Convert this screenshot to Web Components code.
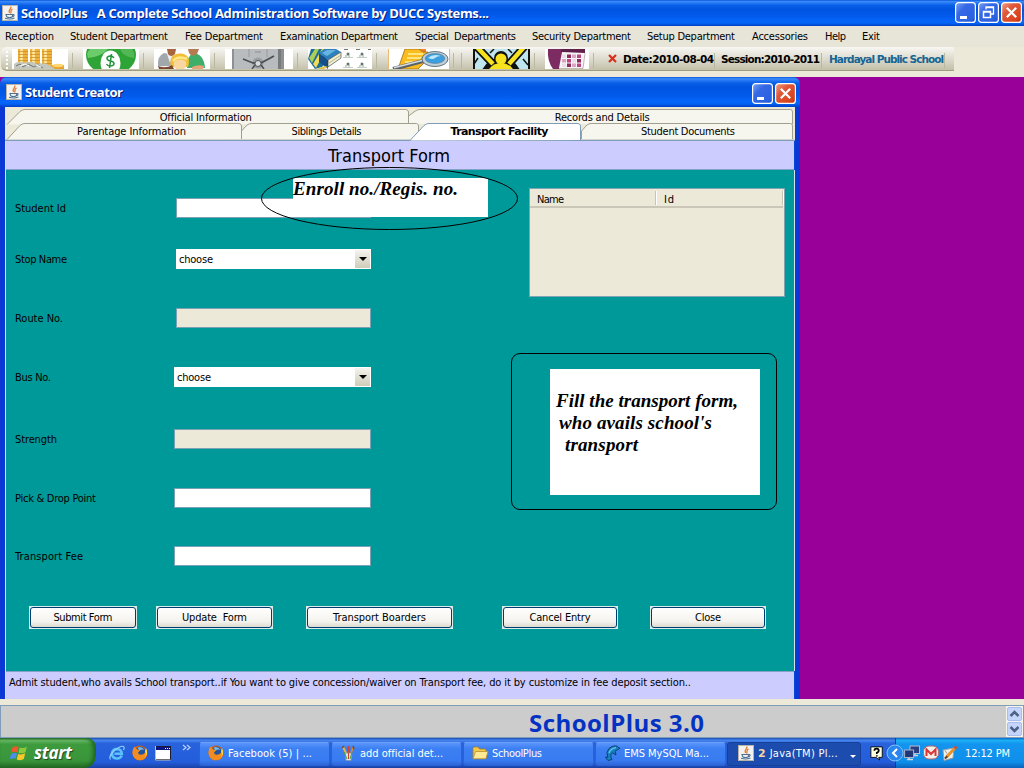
<!DOCTYPE html>
<html lang="en"><head><meta charset="utf-8"><title>SchoolPlus</title>
<style>
html,body{margin:0;padding:0;overflow:hidden;background:#ece9d8}
body{font:11px/14px "DejaVu Sans Condensed","DejaVu Sans",sans-serif;font-stretch:condensed;color:#000}
</style></head><body>
<school-app></school-app>
<script>
const define=(name,html,setup)=>customElements.define(name,class extends HTMLElement{
  connectedCallback(){
    if(this.shadowRoot)return;
    const r=this.attachShadow({mode:'open'});
    r.innerHTML=typeof html==='function'?html(this):html;
    if(setup)setup(this,r);
  }
});

// A single line of text spaced to an exact width.
define('fit-text',e=>`<style>:host{display:block;flex:none;white-space:pre;width:${e.getAttribute('w')}px}span{display:inline-block}</style><span></span>`,(e,r)=>{
  const s=r.querySelector('span');s.textContent=e.getAttribute('t');
  const n=s.getBoundingClientRect().width,w=+e.getAttribute('w');
  const len=s.textContent.length;
  if(len>1)s.style.letterSpacing=((w-n)/(len-1))+'px';
});

const icons={
java:`<rect x=".5" y=".5" width="15" height="15" fill="#f3f2ee" stroke="#b9b4a8"/><path d="M8.800 1.500C10 4 5.500 4.500 7.500 8M10.500 4C7.500 5.500 10 6.500 8.500 8.500" fill="none" stroke="#e8762c" stroke-width="1.300"/><path d="M4 9.500h6.500v1.500q0 1.500-3 1.500t-3-1.500zM10.500 9.800q2-.5 1.500.8t-2 1.200M3 13.300q5 1.500 9.500-.2" fill="none" stroke="#4c7193" stroke-width="1.100"/>`,
flag:`<g transform="skewY(-6) translate(0 1)"><path d="M2 3.500Q4.500 1.500 7.600 3.300L6.500 8Q4 6.500 1 8z" fill="#ee5a2b"/><path d="M8.600 3.800Q11.500 5.500 15 3.800L13.800 8.600Q11 10 7.500 8.500z" fill="#8ac83c"/><path d="M.8 9Q3.500 7.500 6.200 9L5 13.500Q2.500 12-.2 13.500z" fill="#4b8ef0"/><path d="M7.200 9.500Q10.500 11 13.500 9.600L12.300 14.500Q9.500 16 6 14.300z" fill="#fbc927"/></g>`,
ie:`<path d="M12.800 10.500Q11 14 7.500 13.500Q3 13 3 8.500Q3.500 4 8 4Q12.500 4.300 12.800 8.800H5.500" fill="none" stroke="#5ac1fa" stroke-width="2.600"/><path d="M1.500 14.500Q-1 11 6 5Q13-.5 15 2Q15.500 3 14.500 5" fill="none" stroke="#8fd3fb" stroke-width="1.200"/>`,
fox:`<circle cx="8" cy="8" r="7.500" fill="#d9600f"/><circle cx="8.500" cy="6.500" r="5" fill="#23549b"/><path d="M5.500 2.500Q10 1 12.500 5Q9 3.500 7.500 6z" fill="#7ab7e6"/><path d="M1 4Q2 2 3 1.500L4.500 4L8 5.500L6 7.500Q6.500 10.500 10 9.500Q13.500 9 14 4Q17 11 11.500 14.500Q6 16.500 2.500 13Q-.5 9.500 1 4z" fill="#f28c1e"/><path d="M14 3Q17 9 12 13Q15 10 13 6z" fill="#ffd547"/>`,
win:`<rect x=".5" y="1.500" width="15" height="13" fill="#fff" stroke="#1b1b30"/><path d="M1 2h14v3H1z" fill="#0a1484"/><path d="M10 3h1v1h-1zm2 0h1v1h-1zm2 0h1v1h-1z" fill="#fff"/><path d="M.5 1v14h15" fill="none" stroke="#c4c0b0"/>`,
paint:`<path d="M6.500 9L3 2" stroke="#e6b53c" stroke-width="2"/><path d="M8.500 9V1" stroke="#d33f2b" stroke-width="2"/><path d="M10.500 9L13.500 2" stroke="#d8842e" stroke-width="1.800"/><path d="M5 8h7l-1 7.500H6z" fill="#d7e4ec" stroke="#7c93a5" stroke-width=".7"/><path d="M7 14L4 7M10 14l2-7" stroke="#49a23c" stroke-width="1"/><path d="M8.500 14V8" stroke="#d33f2b"/><path d="M2 3l2-2M13 1l1 3" stroke="#7b4a28" stroke-width="1.500"/>`,
folder:`<path d="M1 13.500V3.500Q1 2 2.500 2H6l1.500 2H13q1 0 1 1v8.500z" fill="#f5c84a" stroke="#a5821d" stroke-width=".8"/><path d="M1 13.800L3.500 6.500H16L13.800 13.800z" fill="#ffe994" stroke="#b8922c" stroke-width=".8"/>`,
dolphin:`<path d="M4 15.500Q2.500 14 1.500 12L3.800 12.300Q1.500 7 5 3.500Q8 .8 11.500 .8Q13.500 .8 14 2.300L16 3.200L13.500 4.800Q11.500 5 11.300 6.500L12 10L8.500 7.800Q6 9 7 12.500L8 14.500z" fill="#1681bf" stroke="#07345c" stroke-width=".8"/><path d="M5 8Q6.500 3.500 12 2.600" stroke="#67c8f4" fill="none" stroke-width="1.300"/>`,
help:`<path d="M1 1h13v12H10l1 3-4-3H1z" fill="#ffffe1" stroke="#000"/><path d="M5 5.500Q5 3 7.500 3T10 5.500Q10 7 7.800 7.700V9M7.800 10.500v1.500" fill="none" stroke="#000" stroke-width="2"/>`,
net:`<rect x="6" y="1" width="9.500" height="7.500" fill="#2a3f83" stroke="#b7bed0"/><path d="M8 10.500h6M11 9v2" stroke="#cdd3dd" stroke-width="1.300"/><rect x=".6" y="5" width="9" height="7.500" fill="#203676" stroke="#aab4cc"/><path d="M3 14.500h6M5 13v2" stroke="#d4d8e0" stroke-width="1.500"/>`,
mail:`<rect x=".5" y="1" width="15" height="13" rx="5.500" fill="#f4eeea" stroke="#b06a70"/><path d="M3.500 11V4.500L8 9l4.500-4.500V11" fill="none" stroke="#d63736" stroke-width="2"/>`,
pen:`<path d="M1 5l11-2-1 10-9 2.500z" fill="#f1f1ea" stroke="#9b9fa4"/><path d="M3 5.500l2 3" stroke="#999"/><path d="M4.500 12L13 3" stroke="#e8922b" stroke-width="3"/><path d="M3 13.500l2.300-2.300" stroke="#63402a" stroke-width="2"/><path d="M12.500 3.500l2-2" stroke="#d34d33" stroke-width="3"/>`
};
define('app-icon',e=>`<style>:host{display:block;flex:none;width:16px;height:16px}svg{display:block;overflow:visible}</style><svg width="${e.getAttribute('s')||16}" height="${e.getAttribute('s')||16}" viewBox="0 0 16 16">${icons[e.getAttribute('name')]}</svg>`);

const caps={min:'<path d="M5 14h7v3H5z" fill="#fff"/>',
restore:'<path d="M8 7.500V5h7.500v7H13M8 5.500h8" fill="none" stroke="#fff" stroke-width="1.300"/><path d="M5.500 9.500h7v6h-7zM5.500 10h7" fill="none" stroke="#fff" stroke-width="1.500"/>',
close:'<path d="M5.800 5.800l9.400 9.400m0-9.400l-9.400 9.400" stroke="#fff" stroke-width="2.200"/>'};
define('caption-button',e=>{const k=e.getAttribute('kind'),c=k==='close';return `<style>:host{display:block;flex:none}svg{display:block}</style><svg width="21" height="21" viewBox="0 0 21 21"><defs><linearGradient id="g" x1="0" y1="0" x2="1" y2="1"><stop offset="0" stop-color="${c?'#f0a48c':'#7ba4f6'}"/><stop offset=".35" stop-color="${c?'#e0593a':'#3568e4'}"/><stop offset=".8" stop-color="${c?'#d8421c':'#2a62e2'}"/><stop offset="1" stop-color="${c?'#b03010':'#1d4fc4'}"/></linearGradient></defs><rect x=".6" y=".6" width="19.800" height="19.800" rx="3" fill="url(#g)" stroke="#fff" stroke-width="1.200"/>${caps[k]}</svg>`});

define('title-bar',e=>`<style>
:host{display:flex;flex:none;box-sizing:border-box;align-items:flex-start;background:linear-gradient(#0a55dd 0,#3b8cf8 6%,#2a7df5 10%,#0a5fe8 20%,#0054e0 35%,#0259ea 60%,#0566fb 82%,#0462f2 90%,#003fc4 100%);color:#fff;text-shadow:1px 1px #0a1f78;font:bold 13px/16px "Open Sans","Noto Sans",sans-serif;font-stretch:normal}
.b{margin-left:auto;display:flex;gap:2px}
app-icon{margin-right:3px}
</style><app-icon name="java"></app-icon><fit-text w="${e.getAttribute('w')}" t="${e.getAttribute('t')}"></fit-text><div class="b"><slot></slot></div>`);

const menu=[['Reception',49,16],['Student Department',98,17],['Fee Department',78,17],['Examination Department',118,17],['Special  Departments',101,16],['Security Department',99,16],['Setup Department',88,17],['Accessories',56,17],['Help',21,16],['Exit',18,0]];
define('menu-bar',`<style>:host{display:flex;flex:none;height:21px;padding:4px 0 0 5px;box-sizing:border-box;background:#e7e4d8}</style>`+menu.map(m=>`<fit-text w="${m[1]}" t="${m[0]}" style="margin-right:${m[2]}px"></fit-text>`).join(''));

const stack=(x,y)=>`<rect x="${x}" y="${y}" width="10" height="20" fill="#f0b23a"/><path d="M${x+3.500} ${y}v20" stroke="#ffeaa6" stroke-width="2.500"/>`+[0,3,6,9,12,15].map(i=>`<path d="M${x} ${y+i+2.500}h10" stroke="#c98a22" stroke-width=".7"/>`).join('');
// [width, drawing, gap to the separator, gap after it]
const art=[
[56,stack(6,0)+stack(18,0)+stack(30,0)+`<path d="M40 16h12v4H40z" fill="#e7a42c"/><ellipse cx="46" cy="16.500" rx="5.500" ry="1.700" fill="#ffd56c"/><path d="M2 15q5-4 10-1q7-3 13 1q8-3 18 5H2z" fill="#c3c7bd"/><path d="M4 17l4-2 3 3 5-3 6 3 4-2 5 3" stroke="#73786e" fill="none"/><path d="M8 17l5-2 4 2M24 16l5 2" stroke="#fff" fill="none"/>`,4,10],
[56,`<ellipse cx="28" cy="6" rx="25" ry="20" fill="#2ea336"/><path d="M4 5Q6-2 14-3L25 0Q18 8 5 9z" fill="#6ccb6a"/><path d="M37 0h12q3 4 2 9Q40 8 37 0z" fill="#52b856"/><ellipse cx="27.500" cy="14" rx="10" ry="12.500" fill="#fff"/><path d="M30.800 9Q30 7 27.300 7Q24 7.200 24 9.300Q24 11.500 27.500 12Q31 12.500 31 14.800Q30.500 17 27.300 17Q24.500 17 23.500 15M28.500 5l-2 14" stroke="#23933a" stroke-width="1.500" fill="none"/>`,4,10],
[56,`<path d="M4 17Q3 7 10 4L19 6Q22 10 20 16Q12 18 4 17z" fill="#a2a7ac"/><path d="M13 5l3 9 3-8z" fill="#eee"/><path d="M13 0h9l-1 5q-4 4-7 0z" fill="#a8653f"/><path d="M33 19Q32 8 39 4Q50 5 51 19z" fill="#3fae68"/><path d="M34 0h11l-2 5q-5 4-8-1z" fill="#b77b52"/><path d="M17 18Q14 5 26 4.500Q38 5 34 18z" fill="#f2be35"/><path d="M20 13Q26 8 32 12.500Q33 18 30 20H22Q19 18 20 13z" fill="#fbd7a0"/><path d="M19 12q5-6 14-2" stroke="#ffe88a" stroke-width="2.500" fill="none"/><path d="M4 17q8 3 14-1l2 4H5z" fill="#7c4630"/><path d="M38 18q6-3 12-1l-1 3H38z" fill="#e8a577"/>`,4,10],
[68,`<path d="M7 0h52v20H7z" fill="#8e9193"/><path d="M9 0h44v20H9z" fill="#b9bcbe"/><path d="M53 0h3v20h-3z" fill="#777a7c"/><path d="M24 0v8M42 0v8" stroke="#96999b"/><path d="M30 3h6" stroke="#8a8d8f"/><circle cx="33" cy="14" r="5.500" fill="#9b9ea0"/><path d="M18 10l10 4 6 1 15-8" fill="none" stroke="#4b5054" stroke-width="1.800"/><circle cx="33" cy="14.500" r="3" fill="#d9dbdc" stroke="#54585b"/><path d="M27 20l3-4M39 20l-3-4" stroke="#4b5054" stroke-width="1.500"/>`,4,10],
[64,`<path d="M0 10L3 0h24L14 18 7 20z" fill="#1d6d96"/><path d="M1 9L7 0h4L4 14z" fill="#a8cf57"/><path d="M5 15L14 0h4L8 19z" fill="#f0dc58"/><path d="M11 4L16 0h12l5 3L20 11z" fill="#2d82be"/><path d="M14 4l5-3h9l-9 6z" fill="#66b4df"/><path d="M11 4l9 7v9L11 13z" fill="#174f88"/><path d="M20 11l13-8v6L20 18z" fill="#f2efcd" stroke="#234" stroke-width=".6"/><path d="M21 14l12-8" stroke="#9a9978" stroke-width=".7"/><path d="M8 20l9-3 3 1-4 2z" fill="#e2c34a"/>`+[[40,5],[54,5],[40,15],[54,15]].map(p=>`<path d="M${p[0]-5} ${p[1]+3.500}h10" stroke="#c4cfc4"/><circle cx="${p[0]}" cy="${p[1]}" r="1.500" fill="#65756c"/><path d="M${p[0]-3} ${p[1]+2}h6" stroke="#8fa898" stroke-dasharray="2 1"/>`).join('')+`<path d="M36 .5h27" stroke="#777" stroke-dasharray="4 8"/>`,4,11],
[62,`<path d="M.5 0v20M61.500 0v20" stroke="#ecba72"/><path d="M17 0h21v5H17z" fill="#f08427"/><path d="M17 0h14l4 3h5l-1 8L30 20H10z" fill="#fbbd1d" stroke="#a06416" stroke-width=".8"/><path d="M20 5h15M19 9h14M17 13h12" stroke="#fff2a3" stroke-width="1.500"/><path d="M5 20l30-8" stroke="#5a626a" stroke-width="4"/><path d="M6 18.800l29-7.500" stroke="#d4dce0" stroke-width="1.500"/><ellipse cx="47" cy="10" rx="13" ry="7.500" fill="#c3d0d8" stroke="#66757f"/><ellipse cx="47" cy="9.500" rx="9.800" ry="5" fill="#3b9ede" stroke="#5a7a92" stroke-width=".6"/><path d="M40 9q5-5 13-2q-4 0-6 2t-7 0z" fill="#bfe6fb"/>`,3,19],
[57,`<rect width="57" height="20" fill="#bfe6ef"/><path d="M1 0v20M56 0v20" stroke="#111" stroke-width="2"/><path d="M3-3L20 15M52-3L36 15M12 24Q17 13 28 13Q39 13 44 24" fill="none" stroke="#111" stroke-width="8"/><circle cx="28" cy="9" r="7" fill="#111"/><path d="M3-3L20 15M52-3L36 15" fill="none" stroke="#f7e31d" stroke-width="4.500"/><path d="M14 24Q18 14 28 14Q38 14 42 24z" fill="#f7e31d"/><circle cx="28" cy="10" r="5.500" fill="#f7e31d"/><path d="M5 9l-4 6M50 10l5 6M17 4l4-4M39 4l-4-4" stroke="#111" stroke-width="1.500"/>`,4,10],
[44,`<path d="M3 0h20L14 20H8Q2 12 3 0z" fill="#7d2c63"/><path d="M16 0h24v5H16z" fill="#5f2049"/><path d="M17 3l23 1-2 15H14z" fill="#f8f3f6"/>`+[0,1,2,3].map(i=>[0,1,2].map(j=>`<rect x="${17+i*5}" y="${5.500+j*4.500}" width="4" height="3.500" fill="${['#eadde6','#b94680','#d9a3bf','#8b2c5c'][(i*3+j*2)%4]}"/>`).join('')).join('')+`<path d="M14 19.500h24l2-15" stroke="#987" fill="none" stroke-width=".6"/>`,4,9]
];
define('tool-bar',`<style>
:host{display:block;flex:none;height:30px;background:#ece9d8}
.bar{box-sizing:border-box;width:953px;height:24px;margin-left:1px;border-radius:6px 2px 0 6px;border-bottom:1px solid #a09d80;background:linear-gradient(#f8f7f3,#e6e4da 35%,#c3c1a9);display:flex;padding:2px 0 0 5px}
.grip{width:2px;height:18px;margin:2px 4px 0 0;background:repeating-linear-gradient(#fff 0 2px,transparent 2px 4px)}
svg{display:block;flex:none;background:#fff}
.sep{width:1px;height:15px;margin-top:4px;background:#bbb8a0;flex:none}
.sep.two{box-shadow:8px 0 #bbb8a0}
.info{display:flex;font:bold 10.500px/14px "DejaVu Sans",sans-serif;font-stretch:normal;padding-top:3px}
.x{margin:5px 6px 0 5px;background:none}
.info .sep{margin-top:1px}
</style><div class="bar"><div class="grip"></div>`+art.map((a,i)=>`<svg width="${a[0]}" height="20" viewBox="0 0 ${a[0]} 20" preserveAspectRatio="none">${a[1]}</svg><div class="sep${i===5?' two':''}" style="margin-left:${a[2]}px;margin-right:${a[3]}px"></div>`).join('')+`<svg class="x" width="9" height="9" viewBox="0 0 9 9" style="margin-left:5px"><path d="M1 1l7 7M8 1L1 8" stroke="#d7301b" stroke-width="2.200"/></svg><div class="info"><fit-text w="91" t="Date:2010-08-04"></fit-text><div class="sep" style="margin-right:6px"></div><fit-text w="99" t="Session:2010-2011"></fit-text><div class="sep" style="margin:1px 7px 0 1px"></div><fit-text style="color:#146594" w="115" t="Hardayal Public School"></fit-text><div class="sep"></div></div></div>`);

define('tab-strip',`<style>
:host{display:block;flex:none;height:34px;position:relative;background:#ece9d8}
svg{position:absolute;inset:0}
.r{position:relative;display:flex;height:14px;padding-top:4px;box-sizing:border-box}
.t{display:flex;justify-content:center}
.sel{font:bold 11px/14px "DejaVu Sans",sans-serif;font-stretch:normal}
</style><svg width="790" height="34" viewBox="5 107 790 34"><g fill="#f6f5ee" stroke="#a09f90">
<path d="M408.500 124V116L416 110.500Q418 109.500 420 109.500H790.500Q792.500 109.500 792.500 112V124"/><path d="M7 124.500L20 111.500Q22 109.500 25 109.500H406Q408.500 110 408.500 112V124.500" stroke-linejoin="round"/>
<path d="M581.500 139V131L587 125Q589 123.500 591 123.500H790.500Q792.500 123.500 792.500 126V139"/><path d="M241.500 139V131L247 125Q249 123.500 252 123.500H416.500Q418.500 124 418.500 126V139"/><path d="M7 139.500L20 125.500Q22 123.500 25 123.500H239Q241.500 124 241.500 126V139"/></g>
<path d="M5 140.500H795" stroke="#7f9db9" stroke-width="1.500"/><path d="M410 140.500L424 125.500Q426 123.500 429 123.500H578Q580.500 124 580.500 126V140" fill="#fff" stroke="#7f9db9"/></svg>
<div class="r"><div class="t" style="width:405px"><fit-text w="92" t="Official Information"></fit-text></div><div class="t" style="width:389px;padding-left:3px"><fit-text w="95" t="Records and Details"></fit-text></div></div>
<div class="r"><div class="t" style="width:253px"><fit-text w="109" t="Parentage Information"></fit-text></div><div class="t" style="width:137px"><fit-text w="70" t="Siblings Details"></fit-text></div><div class="t sel" style="width:209px"><fit-text w="98" t="Transport Facility"></fit-text></div><div class="t" style="width:168px"><fit-text w="94" t="Student Documents"></fit-text></div></div>`);

define('form-row',e=>{const k=e.getAttribute('kind')||'text',x=+(e.getAttribute('x')||174);return `<style>
:host{display:flex;flex:none;height:20px;padding-left:9px}
.l{width:${x-15}px;padding-top:4px}
.f{box-sizing:border-box;width:${371-x}px;height:20px;border:1px solid #7ba2b4;background:${k==='off'?'#ece9d8':'#fff'};display:flex;justify-content:space-between;padding:3px 0 0 2px}
.f.combo{border-color:#fff}
.b{width:15px;height:18px;margin-top:-3px;background:linear-gradient(#f4f3ee,#cfccb8);display:flex;align-items:center;justify-content:center}
</style><div class="l"><fit-text w="${e.getAttribute('w')}" t="${e.getAttribute('label').replace('&','&amp;')}"></fit-text></div><div class="f ${k}">${k==='combo'?'<fit-text w="34" t="choose"></fit-text><div class="b"><svg width="8" height="4" viewBox="0 0 8 4"><path d="M0 0h8L4 4z"/></svg></div>':''}</div>`});

define('form-button',e=>`<style>
:host{display:block;flex:none;box-sizing:border-box;width:${e.getAttribute('bw')}px;height:23px;padding:1px;background:#dcece8}
.b{box-sizing:border-box;height:21px;border:1px solid #003c74;border-radius:3px;background:linear-gradient(#fff,#f4f3ee 70%,#dedbd0);display:flex;justify-content:center;padding-top:3px}
</style><div class="b"><fit-text w="${e.getAttribute('w')}" t="${e.getAttribute('t')}"></fit-text></div>`);

define('data-table',`<style>
:host{display:block;box-sizing:border-box;width:256px;height:109px;border:1px solid #7fa5b4;background:#ece9d8}
.h{display:flex;height:19px;box-sizing:border-box;border-bottom:2px solid #cbc7b8;margin-right:1px;padding-top:2px}
.c{box-sizing:border-box;height:14px;padding:2px 0 0 7px;border-right:1px solid #c7c5b2;box-shadow:1px 0 #fff}
.c+.c{padding-left:8px}
</style><div class="h"><div class="c" style="width:126px"><fit-text w="27" t="Name"></fit-text></div><div class="c" style="width:127px"><fit-text w="10" t="Id"></fit-text></div></div>`);

// Call-outs drawn over the form.
define('note-ellipse',`<style>
:host{position:absolute;left:255px;top:-3px;width:257px;height:63px}
svg{position:absolute;inset:0}
.p{position:absolute;left:32px;top:11px;width:195px;height:39px;background:#fff;font:italic bold 19px/22px "Liberation Serif",serif}
</style><div class="p"><fit-text w="165" t="Enroll no./Regis. no."></fit-text></div><svg width="257" height="63"><ellipse cx="128.500" cy="31.500" rx="128" ry="31" fill="none" stroke="#000"/></svg>`);
define('note-box',`<style>
:host{position:absolute;left:505px;top:183px;box-sizing:border-box;width:266px;height:157px;border:1px solid #000;border-radius:9px;padding:15px 0 0 38px}
.p{box-sizing:border-box;width:210px;height:126px;background:#fff;padding:21px 0 0 6px;font:italic bold 19px/22px "Liberation Serif",serif}
</style><div class="p"><fit-text w="182" t="Fill the transport form,"></fit-text><fit-text style="margin-left:3px" w="153" t="who avails school's"></fit-text><fit-text style="margin-left:9px" w="73" t="transport"></fit-text></div>`);

define('creator-window',`<style>
:host{display:flex;flex-direction:column;flex:none;width:800px;height:622px;box-sizing:border-box;background:#0a48d8;border-radius:7px 7px 0 0;overflow:hidden}
title-bar{height:30px;padding:7px 4px 0 6px}
title-bar caption-button{margin-top:-1px}
.w{flex:1;display:flex;flex-direction:column;border:0 solid #0b37d4;border-width:0 5px;overflow:hidden;width:790px}
.in{flex:1;display:flex;flex-direction:column;border-left:1px solid #d5e2f0}
h1{margin:0;height:28px;background:#ccf;font:normal 18px/30px "DejaVu Sans Condensed","DejaVu Sans",sans-serif;font-stretch:condensed;display:flex;padding-left:322px;border-bottom:1px solid #83a2c8;width:466px}
.form{position:relative;background:#099;height:501px;width:789px;display:flex;flex-direction:column;border-right:1px solid #d5e2f0;box-sizing:border-box}
.main{display:flex;height:436px}
.rows{width:523px;padding-top:28px;box-sizing:border-box;display:flex;flex-direction:column}
.side{padding-top:18px}
.btns{display:flex;padding-left:23px}
.foot{height:30px;width:788px;background:#ccf;border-top:1px solid #83a2c8;padding:4px 0 0 3px;box-sizing:border-box}
</style><title-bar t="Student Creator" w="98"><caption-button kind="min"></caption-button><caption-button kind="close"></caption-button></title-bar>
<div class="w"><tab-strip></tab-strip><div class="in"><h1><fit-text w="122" t="Transport Form"></fit-text></h1>
<div class="form"><div class="main"><div class="rows">
<form-row label="Student Id" w="51" x="176"></form-row>
<form-row label="Stop Name" w="52" x="176" kind="combo" style="margin-top:31px"></form-row>
<form-row label="Route No." w="48" x="176" kind="off" style="margin-top:39px"></form-row>
<form-row label="Bus No." w="36" kind="combo" style="margin-top:39px"></form-row>
<form-row label="Strength" w="42" kind="off" style="margin-top:42px"></form-row>
<form-row label="Pick & Drop Point" w="81" style="margin-top:39px"></form-row>
<form-row label="Transport Fee" w="68" style="margin-top:38px"></form-row>
</div><div class="side"><data-table></data-table></div></div>
<div class="btns"><form-button bw="108" w="59" t="Submit Form"></form-button><form-button style="margin-left:19px" bw="117" w="65" t="Update  Form"></form-button><form-button style="margin-left:33px" bw="147" w="93" t="Transport Boarders"></form-button><form-button style="margin-left:49px" bw="116" w="61" t="Cancel Entry"></form-button><form-button style="margin-left:32px" bw="116" w="26" t="Close"></form-button></div>
<note-ellipse></note-ellipse><note-box></note-box></div>
<div class="foot"><fit-text w="682" t="Admit student,who avails School transport..if You want to give concession/waiver on Transport fee, do it by customize in fee deposit section.."></fit-text></div></div></div>`);

define('status-bar',`<style>
:host{display:flex;flex:none;box-sizing:border-box;height:33px;border:1px solid #7f9db9;background:#ccc;justify-content:space-between}
.n{padding:2px 0 0 528px;color:#0433c4;font:bold 24px/29px "Open Sans","Noto Sans",sans-serif;font-stretch:normal}
.s{background:#f4f3ee;width:17px;display:flex;flex-direction:column;gap:1px;padding:1px 0 0 1px;box-sizing:border-box}
svg{display:block}
</style><div class="n"><fit-text w="175" t="SchoolPlus 3.0"></fit-text></div><div class="s">${['M3.500 9L7.500 5L11.500 9','M3.500 5L7.500 9L11.500 5'].map(d=>`<svg width="15" height="14" viewBox="0 0 15 14"><rect x=".5" y=".5" width="14" height="13" rx="1.500" fill="#c4d4fb" stroke="#a9bdf0"/><path d="${d}" fill="none" stroke="#4d6185" stroke-width="2.500"/></svg>`).join('')}</div>`);

define('task-button',e=>`<style>
:host{display:flex;flex:none;box-sizing:border-box;width:131px;height:24px;margin:2px 1px 0 0;border-radius:3px;border:1px solid #2b62d4;border-top-color:#6fa0f7;background:linear-gradient(#5a95fa,#3d80f3 25%,#387af0 80%,#2d66d8);padding:3px 0 0 8px;color:#fff}
:host([active]){background:#1c4cae;border-color:#153f98;width:134px;padding-left:10px}
fit-text{margin:1px 0 0 4px}
app-icon{margin-top:-1px}
b{color:#f5d5a0;margin:1px 0 0 4px;font:bold 11px/14px "DejaVu Sans",sans-serif}
.arr{margin:9px 0 0 auto;padding-right:3px}
</style><app-icon name="${e.getAttribute('icon')}"></app-icon>${e.hasAttribute('active')?'<b>2</b>':''}<fit-text w="${e.getAttribute('w')}" t="${e.getAttribute('t')}"></fit-text>${e.hasAttribute('active')?'<svg class="arr" width="7" height="4"><path d="M0 0h6L3 3z" fill="#fff"/></svg>':''}`);

define('task-bar',`<style>
:host{display:flex;flex:none;height:30px;background:linear-gradient(#1f50b5,#4584ef 8%,#2962dc 18%,#245ddb 80%,#1941a5);overflow:hidden;color:#fff}
.start{width:96px;height:30px;box-sizing:border-box;background:linear-gradient(#2b722b,#6cbd6a 8%,#3d9b3d 20%,#3a953a 75%,#236b25);border-radius:0 9px 12px 0;box-shadow:inset -3px 0 4px #1f6322;display:flex;padding:6px 0 0 10px;font:italic bold 17px/18px "Open Sans","Noto Sans",sans-serif;font-stretch:normal;text-shadow:1px 1px 1px #20471f;flex:none}
.start fit-text{margin-left:8px}
.start app-icon{margin-top:-1px}
.q{display:flex;padding:7px 0 0 13px;width:90px;box-sizing:border-box;gap:7px;flex:none}
.more{flex:none;overflow:visible}
.tasks{display:flex;padding:2px 0 0 0;flex:none}
.help{margin:8px 0 0 8px}
.tray{margin-left:9px;flex:1;display:flex;background:linear-gradient(#0c6ac4,#1cb0f6 8%,#1394ee 20%,#0f8fea 80%,#0c63bd);border-left:1px solid #0b3f9c;position:relative;padding:7px 0 0 8px;gap:3px}
.chev{position:absolute;left:-10px;top:6px}
.tray fit-text{margin:2px 0 0 4px}
</style><div class="start"><app-icon name="flag" s="18"></app-icon><fit-text w="38" t="start"></fit-text></div>
<div class="q"><app-icon name="ie"></app-icon><app-icon name="fox"></app-icon><app-icon name="win"></app-icon></div><svg class="more" width="13" height="30"><path d="M-3 7l3 2.500-3 2.500M1 7l3 2.500-3 2.500" fill="none" stroke="#b9d3ff" stroke-width="1.200"/></svg>
<div class="tasks"><task-button icon="fox" w="84" t="Facebook (5) | ..."></task-button><task-button icon="paint" w="83" t="add official det..."></task-button><task-button icon="folder" w="50" t="SchoolPlus"></task-button><task-button icon="dolphin" w="85" t="EMS MySQL Ma..."></task-button><task-button active icon="java" w="68" t="Java(TM) Pl..."></task-button></div>
<app-icon class="help" name="help" s="14"></app-icon>
<div class="tray"><svg class="chev" width="18" height="18"><circle cx="9" cy="9" r="8" fill="#2a86ee" stroke="#7cc4fa"/><path d="M11 5L7 9l4 4" fill="none" stroke="#fff" stroke-width="2"/></svg><app-icon name="net"></app-icon><app-icon name="mail"></app-icon><app-icon name="pen"></app-icon><fit-text w="45" t="12:12 PM"></fit-text></div>`);

define('school-app',`<style>
:host{display:flex;flex-direction:column;width:1024px;height:768px;overflow:hidden}
.top{height:26px;padding:5px 2px 0 2px}
.top caption-button{margin-top:-3px}
.desk{height:622px;flex:none;background:#909;display:flex}
.gap{height:6px;flex:none;background:#ece9d8}
</style><title-bar class="top" t="SchoolPlus   A Complete School Administration Software by DUCC Systems..." w="468"><caption-button kind="min"></caption-button><caption-button kind="restore"></caption-button><caption-button kind="close"></caption-button></title-bar>
<menu-bar></menu-bar><tool-bar></tool-bar><div class="desk"><creator-window></creator-window></div><div class="gap"></div><status-bar></status-bar><task-bar></task-bar>`);
</script></body></html>
